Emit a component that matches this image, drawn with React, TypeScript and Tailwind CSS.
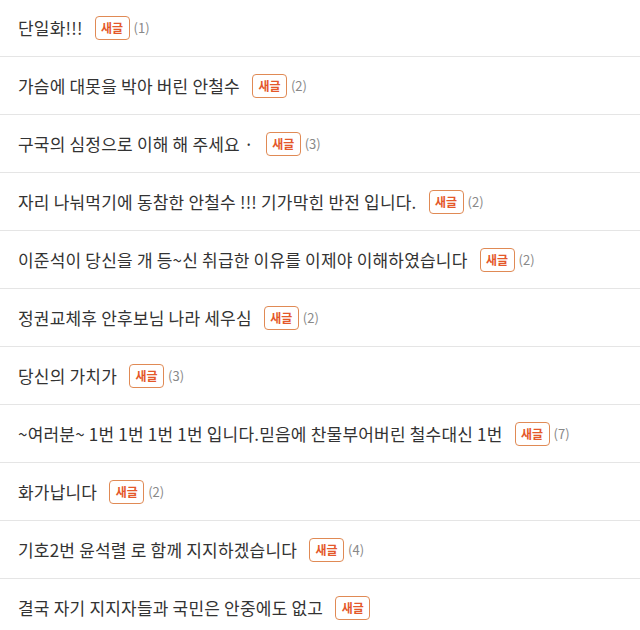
const ITEMS: { title: string; count?: number }[] = [
  { title: '단일화!!!', count: 1 },
  { title: '가슴에 대못을 박아 버린 안철수', count: 2 },
  { title: '구국의 심정으로 이해 해 주세요 ·', count: 3 },
  { title: '자리 나눠먹기에 동참한 안철수 !!! 기가막힌 반전 입니다.', count: 2 },
  { title: '이준석이 당신을 개 등~신 취급한 이유를 이제야 이해하였습니다', count: 2 },
  { title: '정권교체후 안후보님 나라 세우심', count: 2 },
  { title: '당신의 가치가', count: 3 },
  { title: '~여러분~ 1번 1번 1번 1번 입니다.믿음에 찬물부어버린 철수대신 1번', count: 7 },
  { title: '화가납니다', count: 2 },
  { title: '기호2번 윤석렬 로 함께 지지하겠습니다', count: 4 },
  { title: '결국 자기 지지자들과 국민은 안중에도 없고' },
];

export default function App() {
  return (
    <div className="w-[640px] h-[630px] overflow-hidden bg-white font-['Noto_Sans_CJK_KR','Noto_Sans',sans-serif]">
      <ul className="-mt-px">
        {ITEMS.map((item, i) => (
          <li key={i} className="h-[58px] border-b border-[#e5e5e5] flex items-center pl-[18px] pt-px">
            <span className="text-[17px] text-[#333] tracking-[0.2px]">{item.title}</span>
            <span className="ml-[12px] h-[24px] w-[35px] justify-center flex items-center rounded-[4px] border border-[#e08a55] text-[12px] font-bold text-[#e4582a] leading-none">
              새글
            </span>
            {item.count !== undefined && (
              <span className="ml-[4px] text-[13px] text-[#888]">({item.count})</span>
            )}
          </li>
        ))}
      </ul>
    </div>
  );
}
